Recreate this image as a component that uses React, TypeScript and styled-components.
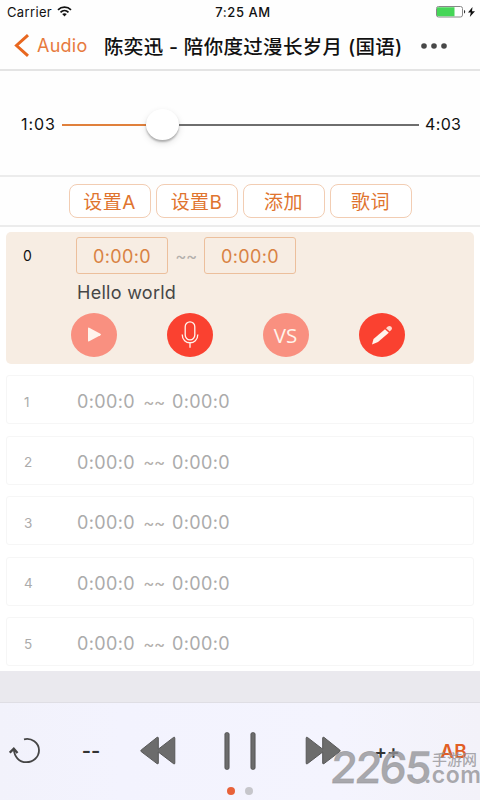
import React from "react";
import styled, { createGlobalStyle } from "styled-components";

const GlobalStyle = createGlobalStyle`
  * { box-sizing: border-box; }
  body { margin: 0; background: #fff; }
`;

const Screen = styled.main`
  position: relative;
  width: 480px;
  height: 800px;
  display: flex;
  flex-direction: column;
  overflow: hidden;
  background: #fefefe;
  color: #111;
  font-family: Inter, "Noto Sans CJK SC", sans-serif;
  white-space: nowrap;
`;

const StatusBar = styled.div`
  height: 22px;
  display: grid;
  grid-template-columns: 1fr auto 1fr;
  align-items: center;
  padding: 1px 5px 0 7px;
  font-size: 13px;
`;
const StatusLeft = styled.div`
  display: flex;
  align-items: center;
  gap: 5px;
  letter-spacing: 0.35px;
`;
const Clock = styled.div`
  font-weight: 500;
  letter-spacing: 0.55px;
  padding-left: 4px;
`;
const StatusRight = styled.div`
  display: flex;
  justify-content: flex-end;
  align-items: center;
  gap: 2px;
`;

const NavBar = styled.header`
  height: 49px;
  display: flex;
  align-items: center;
  padding-left: 14px;
  border-bottom: 2px solid #e4e4e4;
`;
const BackLink = styled.div`
  width: 90px;
  display: flex;
  align-items: center;
  gap: 7px;
  color: #e77a3d;
  font-size: 18px;
  letter-spacing: 0.25px;
`;
const Title = styled.h1`
  margin: 0;
  width: 317px;
  padding-bottom: 1px;
  font-size: 19.5px;
  font-weight: 500;
  letter-spacing: 0.32px;
`;

const SliderSection = styled.section`
  height: 106px;
  display: flex;
  align-items: center;
  padding: 2px 18px 0 21px;
  border-bottom: 2px solid #ececec;
  font-size: 16px;
`;
const TimeLabel = styled.span<{ $width: number; $spacing: number }>`
  width: ${(p) => p.$width}px;
  letter-spacing: ${(p) => p.$spacing}px;
`;
const Track = styled.div`
  width: 357px;
  height: 34px;
  margin-right: 6px;
  padding-top: 1px;
  display: flex;
  align-items: center;
`;
const TrackPart = styled.div<{ $width: number; $color: string }>`
  width: ${(p) => p.$width}px;
  height: 2px;
  background: ${(p) => p.$color};
`;
const Thumb = styled.div`
  width: 33px;
  height: 31px;
  margin-top: -1px;
  border-radius: 50%;
  background: #fff;
  box-shadow: 0 2px 2px rgba(0, 0, 0, 0.25), 0 3px 7px rgba(0, 0, 0, 0.12);
`;

const Toolbar = styled.div`
  height: 50px;
  display: flex;
  justify-content: center;
  align-items: center;
  gap: 5px;
  border-bottom: 2px solid #ececec;
`;
const ToolButton = styled.button`
  width: 82px;
  height: 34px;
  padding: 0 0 2px;
  border: 1px solid #f2cdb3;
  border-radius: 8px;
  background: #fff;
  color: #e0742f;
  font-family: inherit;
  font-size: 19px;
  letter-spacing: 0.4px;
`;

const Segments = styled.section`
  height: 444px;
  padding: 5px 6px 0;
  display: flex;
  flex-direction: column;
  gap: 11.5px;
  overflow: hidden;
  background: #fff;
`;
const ActiveSegment = styled.div`
  flex: none;
  height: 131.5px;
  padding: 5px 0 0 17px;
  border-radius: 5px;
  background: #f7ede3;
`;
const SegmentLine = styled.div`
  display: flex;
  align-items: center;
`;
const Index = styled.span`
  width: 53px;
  font-size: 14px;
`;
const TimeBox = styled.span`
  width: 92px;
  height: 37px;
  display: flex;
  align-items: center;
  justify-content: center;
  padding-top: 1px;
  border: 1px solid #ecbf9c;
  border-radius: 3px;
  color: #d98242;
  font-size: 18px;
  letter-spacing: 0.4px;
`;
const Tildes = styled.span`
  width: 36px;
  text-align: center;
  color: #b4b0ad;
  font-size: 17px;
  letter-spacing: -0.5px;
`;
const Caption = styled.div`
  padding: 7px 0 0 54px;
  color: #464646;
  font-size: 18px;
  line-height: 24px;
  letter-spacing: 0.28px;
`;
const Actions = styled.div`
  display: flex;
  gap: 50px;
  margin: 7.5px 0 0 47.5px;
`;
const RoundButton = styled.span<{ $dim?: boolean }>`
  width: 46px;
  height: 44px;
  display: flex;
  align-items: center;
  justify-content: center;
  border-radius: 50%;
  background: ${(p) => (p.$dim ? "#f99080" : "#fa4130")};
  color: #fff4ec;
`;
const Versus = styled.span`
  font-family: "Open Sans", sans-serif;
  font-size: 20.5px;
  font-weight: 500;
  letter-spacing: -0.1px;
`;
const SegmentRow = styled.div`
  flex: none;
  height: 49px;
  display: flex;
  align-items: center;
  padding: 4px 0 0 17px;
  border: 1px solid #f6f6f6;
  border-radius: 3px;
  background: #fff;
  color: #ababab;
`;
const RowIndex = styled(Index)`
  font-size: 13.5px;
`;
const RowTime = styled.span<{ $width: number }>`
  width: ${(p) => p.$width}px;
  font-size: 18px;
  letter-spacing: 0.38px;
`;

const Spacer = styled.div`
  height: 32px;
  background: #eae9ee;
  border-bottom: 1px solid #dfdee4;
`;
const Player = styled.footer`
  height: 97px;
  display: flex;
  flex-direction: column;
  background: linear-gradient(90deg, #f2f2fb, #f3f3fe 25%, #f4f4fe 70%, #f3f2f9);
`;
const Controls = styled.div`
  height: 80px;
  display: grid;
  grid-template-columns: 49px 84px 49px 116px 49px 80px 53px;
  align-items: center;
  justify-items: center;
  padding-top: 16px;
  color: #333;
`;
const StepLabel = styled.span<{ $size: number }>`
  font-size: ${(p) => p.$size}px;
  font-weight: 600;
`;
const RepeatLabel = styled.span`
  color: #e25e24;
  font-size: 19px;
  font-weight: 600;
`;
const Dots = styled.div`
  display: flex;
  justify-content: center;
  gap: 10.5px;
  padding-top: 4px;
`;
const Dot = styled.span<{ $color: string }>`
  width: 8px;
  height: 8px;
  border-radius: 50%;
  background: ${(p) => p.$color};
`;

const Watermark = styled.div`
  position: absolute;
  left: 331px;
  top: 744px;
  width: 149px;
  height: 46px;
  display: flex;
  color: rgba(147, 147, 151, 0.78);
`;
const WatermarkNumber = styled.span`
  width: 93px;
  font-family: Inter, sans-serif;
  font-size: 43px;
  font-weight: 500;
  line-height: 46px;
  letter-spacing: -2px;
  transform: skewX(-5deg);
  -webkit-text-stroke: 0.8px rgba(147, 147, 151, 0.6);
`;
const WatermarkSide = styled.span`
  display: flex;
  flex-direction: column;
  padding-top: 9px;
`;
const WatermarkName = styled.span`
  padding-left: 8px;
  font-size: 15px;
  line-height: 14px;
  font-weight: 500;
`;
const WatermarkDomain = styled.span`
  font-size: 23px;
  font-weight: 600;
  line-height: 17px;
  letter-spacing: 0.5px;
`;

const WifiIcon = () => (
  <svg width="15" height="11" viewBox="0 0 15 11" fill="none" stroke="#111" strokeWidth="1.7">
    <path d="M1 3.8C4.6.3 10.4.3 14 3.8M3.5 6.3c2.3-2.2 5.7-2.2 8 0" />
    <path d="M7.5 10.4 5.2 8.1c1.3-1.1 3.3-1.1 4.6 0z" fill="#111" stroke="none" />
  </svg>
);
const BatteryIcon = () => (
  <svg width="30" height="12" viewBox="0 0 30 12">
    <rect x=".5" y=".5" width="26" height="10.5" rx="2" fill="#fff" stroke="#888" />
    <path d="M2 1.2h16.5v9H2q-1 0-1-1v-7q0-1 1-1z" fill="#45d657" />
    <path d="M28 4q1.2 0 1.2 1.8T28 7.6z" fill="#333" />
  </svg>
);
const BoltIcon = () => (
  <svg width="7" height="10" viewBox="0 0 7 10">
    <path d="M4.5 0 0 5.5h2.8L1.8 10 7 4.2H4z" fill="#111" />
  </svg>
);
const BackIcon = () => (
  <svg width="16" height="23" viewBox="0 0 16 23" fill="none" stroke="#e8671f" strokeWidth="3">
    <path d="M14 1.2 2.5 11.5 14 21.8" />
  </svg>
);
const MoreIcon = () => (
  <svg width="26" height="6" viewBox="0 0 26 6" fill="#484848">
    <circle cx="3" cy="3" r="2.8" />
    <circle cx="13" cy="3" r="2.8" />
    <circle cx="23" cy="3" r="2.8" />
  </svg>
);
const PlayIcon = () => (
  <svg width="16" height="15" viewBox="0 0 16 15" fill="currentColor">
    <path d="M2 1.3Q2 .1 3.2.7l11.2 6q1.3.8 0 1.6l-11.2 6Q2 14.9 2 13.7z" />
  </svg>
);
const MicIcon = () => (
  <svg width="18" height="27" viewBox="0 0 18 27" fill="none" stroke="currentColor" strokeWidth="1.3">
    <rect x="4.2" y=".9" width="9.6" height="18" rx="4.8" />
    <path d="M1.2 13.5c0 11 15.6 11 15.6 0M9 21.7v5" />
  </svg>
);
const PencilIcon = () => (
  <svg width="22" height="20" viewBox="0 0 22 20" fill="currentColor">
    <path d="M1 19.5 2.5 14 14 4.2l3.8 3.5L7 17z" />
    <path d="m15 3.2 1.8-1.7q1.9-1.2 3.5.3 1.4 1.5.2 3l-1.8 1.8z" opacity=".85" />
  </svg>
);
const RestartIcon = () => (
  <svg width="32" height="28" viewBox="0 0 32 28" fill="none" stroke="#454545" strokeWidth="1.8">
    <path d="M15 2.3C22.5.4 30 5.8 30 13.3 30 20 24.4 25.2 17.3 25.2S5.2 20 4.8 11.8" />
    <path d="m.8 15.7 4-4 3.7 4.3" strokeWidth="2.3" />
  </svg>
);
const RewindIcon = ({ forward }: { forward?: boolean }) => (
  <svg
    width="36"
    height="30"
    viewBox="0 0 36 30"
    fill="#6c6c6c"
    stroke="#575757"
    transform={forward ? "scale(-1 1)" : undefined}
  >
    <path d="M1.2 14 17 1.4q1.3-.7 1.3.6v11.2L33.6 1.4q1.2-.7 1.2.7v25q0 1.4-1.2.6L18.3 16v11q0 1.4-1.3.6L1.2 15.6q-.8-.8 0-1.6z" />
  </svg>
);
const PauseIcon = () => (
  <svg width="32" height="38" viewBox="0 0 32 38" fill="#6c6c6c" stroke="#4d4d4d" strokeWidth=".8">
    <rect x=".9" y=".6" width="4.2" height="36.8" rx="1.7" />
    <rect x="26.9" y=".6" width="4.2" height="36.8" rx="1.7" />
  </svg>
);

const TOOLS = ["设置A", "设置B", "添加", "歌词"];
const ROWS = [1, 2, 3, 4, 5];
const ZERO = "0:00:0";

export default function App() {
  return (
    <Screen>
      <GlobalStyle />
      <StatusBar>
        <StatusLeft>
          Carrier
          <WifiIcon />
        </StatusLeft>
        <Clock>7:25 AM</Clock>
        <StatusRight>
          <BatteryIcon />
          <BoltIcon />
        </StatusRight>
      </StatusBar>
      <NavBar>
        <BackLink>
          <BackIcon />
          Audio
        </BackLink>
        <Title>陈奕迅 - 陪你度过漫长岁月 (国语)</Title>
        <MoreIcon />
      </NavBar>
      <SliderSection>
        <TimeLabel $width={41} $spacing={0.9}>1:03</TimeLabel>
        <Track>
          <TrackPart $width={84} $color="#e0803c" />
          <Thumb />
          <TrackPart $width={240} $color="#6e6e6e" />
        </Track>
        <TimeLabel $width={37} $spacing={0.35}>4:03</TimeLabel>
      </SliderSection>
      <Toolbar>
        {TOOLS.map((label) => (
          <ToolButton key={label}>{label}</ToolButton>
        ))}
      </Toolbar>
      <Segments>
        <ActiveSegment>
          <SegmentLine>
            <Index>0</Index>
            <TimeBox>{ZERO}</TimeBox>
            <Tildes>~~</Tildes>
            <TimeBox>{ZERO}</TimeBox>
          </SegmentLine>
          <Caption>Hello world</Caption>
          <Actions>
            <RoundButton $dim>
              <PlayIcon />
            </RoundButton>
            <RoundButton>
              <MicIcon />
            </RoundButton>
            <RoundButton $dim>
              <Versus>VS</Versus>
            </RoundButton>
            <RoundButton>
              <PencilIcon />
            </RoundButton>
          </Actions>
        </ActiveSegment>
        {ROWS.map((n) => (
          <SegmentRow key={n}>
            <RowIndex>{n}</RowIndex>
            <RowTime $width={59}>{ZERO}</RowTime>
            <Tildes>~~</Tildes>
            <RowTime $width={60}>{ZERO}</RowTime>
          </SegmentRow>
        ))}
      </Segments>
      <Spacer />
      <Player>
        <Controls>
          <RestartIcon />
          <StepLabel $size={20}>--</StepLabel>
          <RewindIcon />
          <PauseIcon />
          <RewindIcon forward />
          <StepLabel $size={19}>++</StepLabel>
          <RepeatLabel>AB</RepeatLabel>
        </Controls>
        <Dots>
          <Dot $color="#e8623a" />
          <Dot $color="#c6c6cb" />
        </Dots>
      </Player>
      <Watermark>
        <WatermarkNumber>2265</WatermarkNumber>
        <WatermarkSide>
          <WatermarkName>手游网</WatermarkName>
          <WatermarkDomain>.com</WatermarkDomain>
        </WatermarkSide>
      </Watermark>
    </Screen>
  );
}
